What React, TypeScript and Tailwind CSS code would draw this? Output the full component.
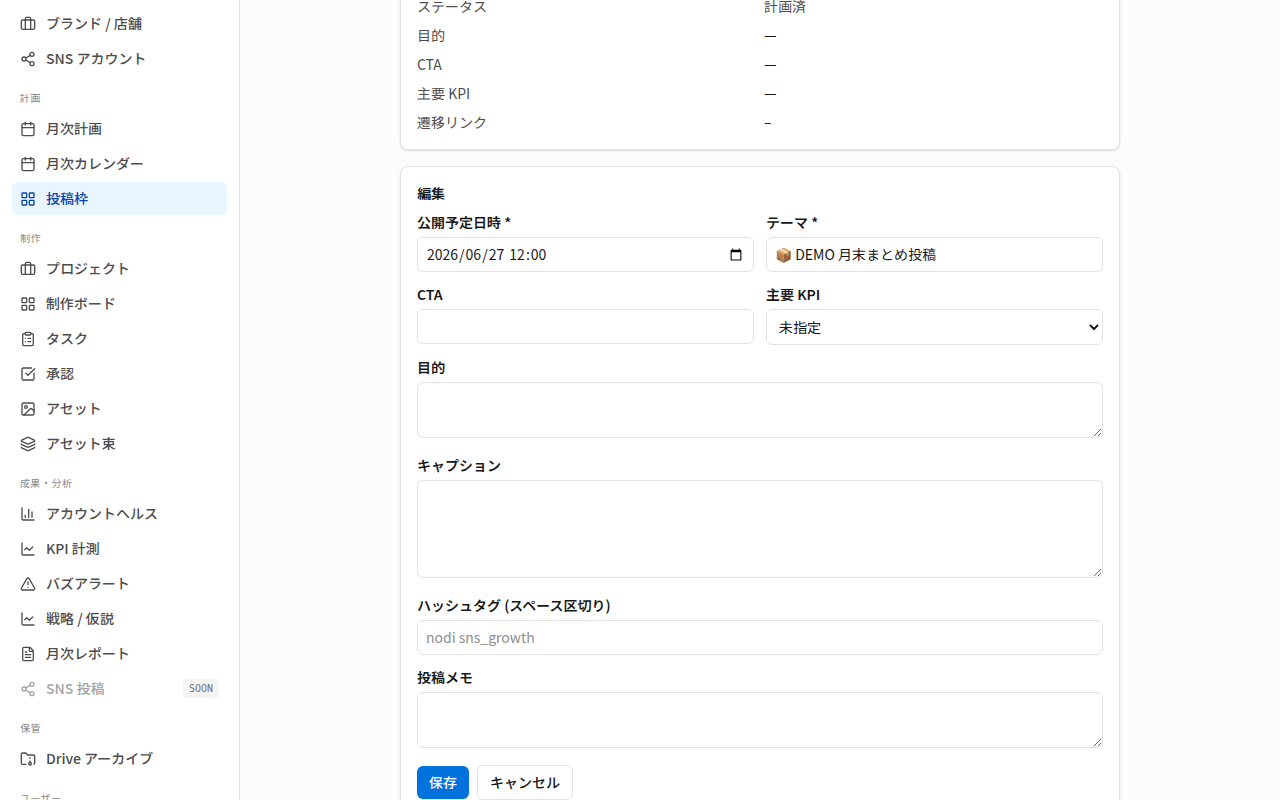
import { useState } from "react";
import type { ReactNode } from "react";
import {
  Calendar,
  ChartColumn,
  ChartLine,
  ClipboardList,
  FileText,
  FolderArchive,
  Image,
  Layers,
  LayoutGrid,
  Share2,
  SquareCheckBig,
  TriangleAlert,
} from "lucide-react";
import type { LucideIcon } from "lucide-react";

type NavItem = { label: string; icon: LucideIcon; active?: boolean; soon?: boolean };
type NavSection = { title?: string; items: NavItem[] };

const BriefcaseIcon = ((props: { className?: string }) => (
  <svg
    viewBox="0 0 24 24"
    fill="none"
    stroke="currentColor"
    strokeWidth={2}
    strokeLinecap="round"
    strokeLinejoin="round"
    className={props.className}
    aria-hidden="true"
  >
    <path d="M16 20V4a2 2 0 0 0-2-2h-4a2 2 0 0 0-2 2v16" />
    <rect width="20" height="14" x="2" y="6" rx="2" />
  </svg>
)) as unknown as LucideIcon;

const sections: NavSection[] = [
  {
    items: [
      { label: "ブランド / 店舗", icon: BriefcaseIcon },
      { label: "SNS アカウント", icon: Share2 },
    ],
  },
  {
    title: "計画",
    items: [
      { label: "月次計画", icon: Calendar },
      { label: "月次カレンダー", icon: Calendar },
      { label: "投稿枠", icon: LayoutGrid, active: true },
    ],
  },
  {
    title: "制作",
    items: [
      { label: "プロジェクト", icon: BriefcaseIcon },
      { label: "制作ボード", icon: LayoutGrid },
      { label: "タスク", icon: ClipboardList },
      { label: "承認", icon: SquareCheckBig },
      { label: "アセット", icon: Image },
      { label: "アセット束", icon: Layers },
    ],
  },
  {
    title: "成果・分析",
    items: [
      { label: "アカウントヘルス", icon: ChartColumn },
      { label: "KPI 計測", icon: ChartLine },
      { label: "バズアラート", icon: TriangleAlert },
      { label: "戦略 / 仮説", icon: ChartLine },
      { label: "月次レポート", icon: FileText },
      { label: "SNS 投稿", icon: Share2, soon: true },
    ],
  },
  { title: "保管", items: [{ label: "Drive アーカイブ", icon: FolderArchive }] },
  { title: "ユーザー", items: [] },
];

const details = [
  { term: "ステータス", value: "計画済", muted: true },
  { term: "目的", value: "—" },
  { term: "CTA", value: "—" },
  { term: "主要 KPI", value: "—" },
  { term: "遷移リンク", value: "–" },
];

const control =
  "w-full rounded-md border border-[#e2e2e2] bg-white px-2 py-1.5 text-sm leading-[21px] text-[#171717] placeholder:text-[#8f8f8f]";

function NavRow({ item }: { item: NavItem }) {
  const Icon = item.icon;
  const row = "flex items-center gap-2.5 rounded-md px-2 py-1.5 leading-[21px] font-medium";

  if (item.soon) {
    return (
      <span className={`${row} text-[#a3a3a3]`} aria-disabled="true">
        <Icon className="h-4 w-4 shrink-0" />
        <span className="flex-1">{item.label}</span>
        <span className="-my-1 rounded bg-[#f4f4f4] px-1.5 py-0.5 font-['DejaVu_Sans_Mono',monospace] text-[10px] leading-[15px] text-[#737373]">
          SOON
        </span>
      </span>
    );
  }

  return (
    <a
      href="#"
      aria-current={item.active ? "page" : undefined}
      className={`${row} ${item.active ? "bg-[#e9f5ff] text-[#0546a8]" : "text-[#4d4d4d]"}`}
    >
      <Icon className="h-4 w-4 shrink-0" />
      {item.label}
    </a>
  );
}

function Sidebar() {
  return (
    <aside className="w-60 shrink-0 overflow-hidden border-r border-[#e2e2e2] bg-white px-3 pt-[7px]">
      <nav className="flex flex-col gap-4">
        {sections.map((section, i) => (
          <div key={section.title ?? i} className="flex flex-col gap-0.5">
            {section.title && (
              <h2 className="px-2 pb-1.5 text-[10px] leading-[13px] tracking-wider text-[#8a8a8a]">
                {section.title}
              </h2>
            )}
            {section.items.map((item) => (
              <NavRow key={item.label} item={item} />
            ))}
          </div>
        ))}
      </nav>
    </aside>
  );
}

function Field({ id, label, children }: { id: string; label: string; children: ReactNode }) {
  return (
    <div>
      <label htmlFor={id} className="mb-1 block font-semibold">
        {label}
      </label>
      {children}
    </div>
  );
}

// The native field follows the browser locale, so the value is drawn over it as YYYY/MM/DD HH:mm.
function DateTimeInput({ id }: { id: string }) {
  const [value, setValue] = useState("2026-06-27T12:00");
  const [year, month, day, hour, minute] = value.split(/[-T:]/);

  return (
    <div className="relative">
      <input
        id={id}
        type="datetime-local"
        value={value}
        onChange={(e) => setValue(e.target.value)}
        className={`${control} block [&::-webkit-datetime-edit]:opacity-0`}
      />
      {value && (
        <span className="pointer-events-none absolute top-[7px] left-[9px] whitespace-pre" aria-hidden="true">
          <span className="px-px">{year}</span>/<span className="px-px">{month}</span>/
          <span className="px-px">{day}</span> <span className="px-px">{hour}</span>:
          <span className="px-px">{minute}</span>
        </span>
      )}
    </div>
  );
}

function EditForm() {
  const [theme, setTheme] = useState("📦 DEMO 月末まとめ投稿");

  return (
    <form className="flex flex-col gap-3" onSubmit={(e) => e.preventDefault()}>
      <div className="grid grid-cols-2 gap-3">
        <Field id="scheduled" label="公開予定日時 *">
          <DateTimeInput id="scheduled" />
        </Field>
        <Field id="theme" label="テーマ *">
          <input id="theme" value={theme} onChange={(e) => setTheme(e.target.value)} className={`${control} block`} />
        </Field>
        <Field id="cta" label="CTA">
          <input id="cta" className={`${control} block`} />
        </Field>
        <Field id="kpi" label="主要 KPI">
          <select id="kpi" className={`${control} block h-9`}>
            <option>未指定</option>
          </select>
        </Field>
      </div>
      <Field id="purpose" label="目的">
        <textarea id="purpose" rows={2} className={`${control} resize`} />
      </Field>
      <Field id="caption" label="キャプション">
        <textarea id="caption" rows={4} className={`${control} resize`} />
      </Field>
      <Field id="hashtags" label="ハッシュタグ (スペース区切り)">
        <input id="hashtags" placeholder="nodi sns_growth" className={`${control} block`} />
      </Field>
      <Field id="memo" label="投稿メモ">
        <textarea id="memo" rows={2} className={`${control} resize`} />
      </Field>
      <div className="flex items-center gap-2">
        <button type="submit" className="rounded-md bg-[#0072db] px-3 py-1.5 font-medium text-white">
          保存
        </button>
        <button type="button" className="rounded-md border border-[#e2e2e2] bg-white px-3 py-1.5 font-medium">
          キャンセル
        </button>
      </div>
    </form>
  );
}

export default function App() {
  return (
    <div
      lang="ja"
      className="flex h-screen overflow-hidden bg-[#fcfcfc] font-['Noto_Sans_JP','Noto_Sans_CJK_JP',sans-serif] text-sm leading-[21px] text-[#171717]"
    >
      <Sidebar />
      <main className="min-w-0 flex-1 overflow-hidden">
        <div className="mx-auto -mt-1 flex max-w-[720px] flex-col gap-4">
          <section className="rounded-b-lg border border-t-0 border-[#e2e2e2] bg-white px-4 pb-4 shadow-sm">
            <dl className="grid grid-cols-2 gap-2">
              {details.map((row) => (
                <div key={row.term} className="contents">
                  <dt className="text-[#4d4d4d]">{row.term}</dt>
                  <dd className={row.muted ? "text-[#4d4d4d]" : ""}>{row.value}</dd>
                </div>
              ))}
            </dl>
          </section>
          <section className="rounded-lg border border-[#e2e2e2] bg-white p-4 shadow-sm">
            <h2 className="mb-2 font-semibold">編集</h2>
            <EditForm />
          </section>
        </div>
      </main>
    </div>
  );
}
